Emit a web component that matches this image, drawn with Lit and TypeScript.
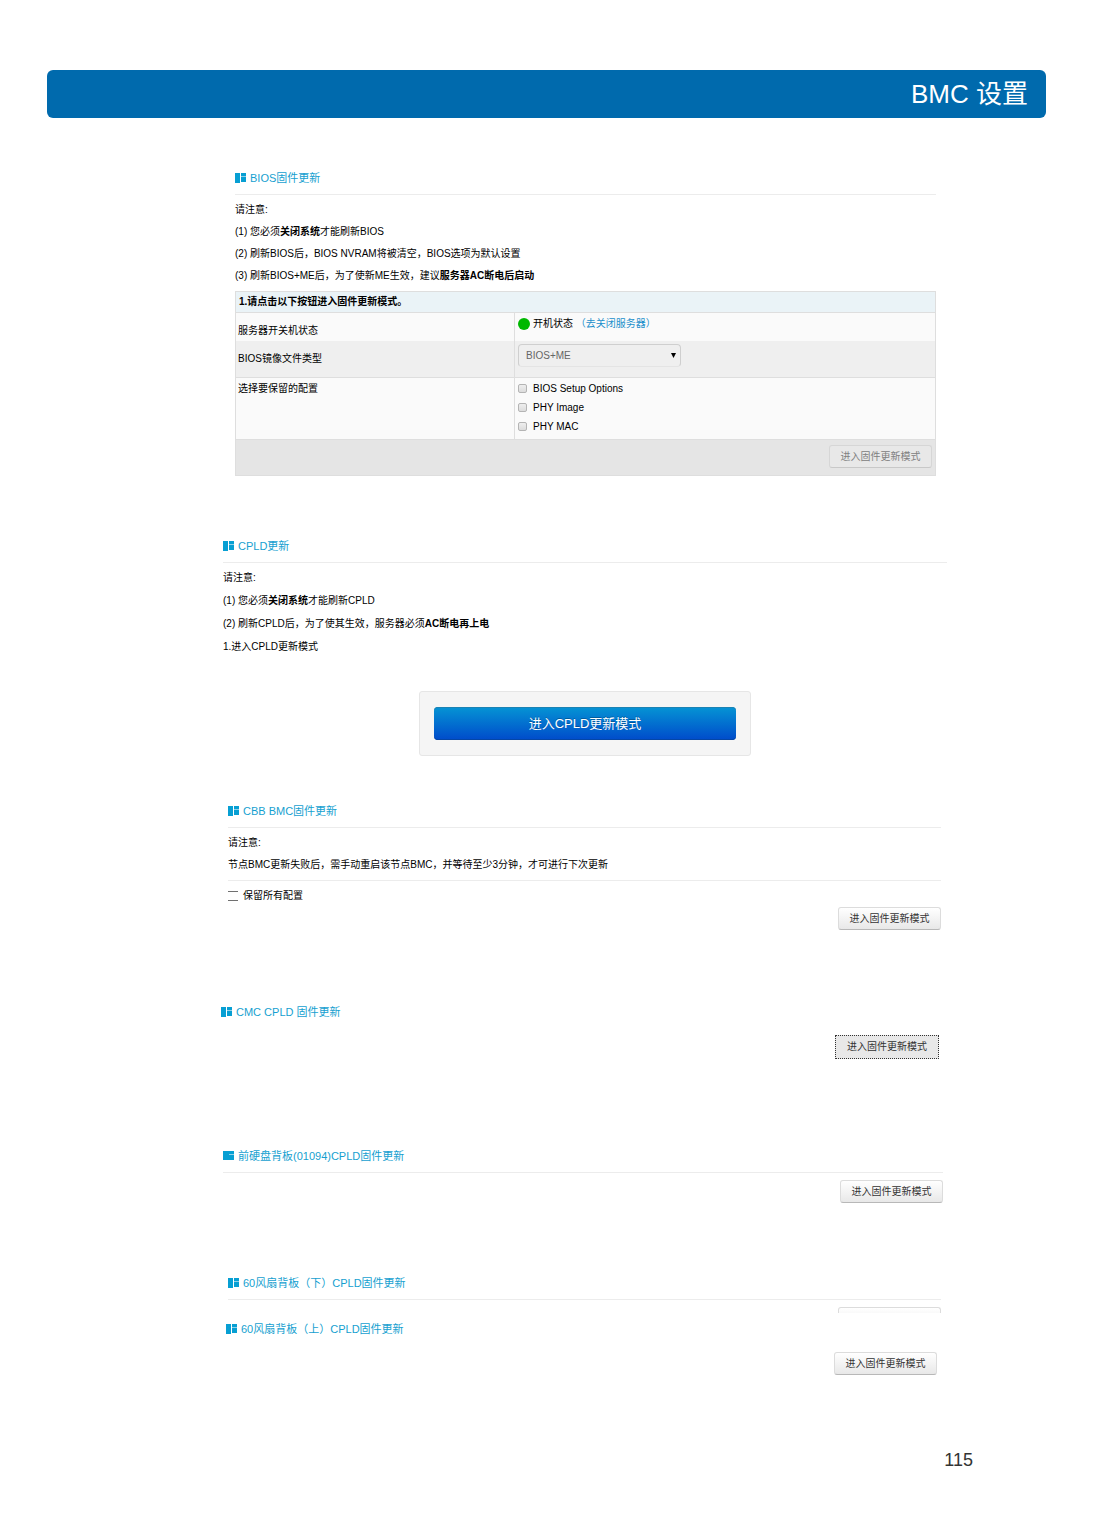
import { LitElement, html, css, svg, nothing } from "lit";
import { customElement, property } from "lit/decorators.js";

const ENTER_MODE = "进入固件更新模式";

@customElement("section-title")
class SectionTitle extends LitElement {
  @property({ type: Boolean }) ruled = false;
  @property({ type: Boolean }) joined = false;

  static styles = css`
    :host {
      display: block;
    }
    .title {
      display: flex;
      align-items: center;
      gap: 3px;
      margin: 0;
      border-bottom: 1px solid transparent;
      font-size: 11px;
      font-weight: 400;
      line-height: 32px;
      color: #169fd0;
    }
    .ruled {
      border-bottom-color: #ececec;
    }
    .icon {
      width: 12px;
      height: 10px;
      flex: none;
      fill: #079fd3;
    }
  `;

  render() {
    const blocks = this.joined
      ? svg`<path d="M0 0h11v3H6.500v1H11v5H0z"/><path d="M6 3h5v1H6z" fill="#8fd2ea"/>`
      : svg`<path d="M0 0h5v10H0zM6 0h5v3H6zM6 4h5v5H6z"/><path d="M6 3h5v1H6z" fill="#8fd2ea"/>`;
    return html`<h2 class="title ${this.ruled ? "ruled" : ""}">
      <svg class="icon" viewBox="0 0 12 10" aria-hidden="true">${blocks}</svg>
      <span><slot></slot></span>
    </h2>`;
  }
}

@customElement("mode-button")
class ModeButton extends LitElement {
  @property() label = ENTER_MODE;
  @property() variant = "";
  @property({ type: Boolean }) disabled = false;

  static styles = css`
    :host {
      display: flex;
      justify-content: flex-end;
    }
    .btn {
      box-sizing: border-box;
      height: 23px;
      min-width: 103px;
      padding: 0 9px;
      border: 1px solid #dcdcdc;
      border-bottom-color: #b8b8b8;
      border-radius: 3px;
      background: linear-gradient(#ffffff, #e8e8e8);
      color: #333;
      font: inherit;
      line-height: 20px;
    }
    .btn:disabled {
      background: #e8e8e8;
      border-color: #d6d6d6;
      border-bottom-color: #c8c8c8;
      color: #808080;
    }
    .focused {
      height: 24px;
      min-width: 104px;
      border: 1px dotted #333;
      border-radius: 0;
      background: #e8e8e8;
    }
    .primary {
      width: 100%;
      height: 33px;
      border: 0;
      border-radius: 4px;
      background: linear-gradient(#0594d4, #004bcb);
      box-shadow: inset 0 1px 0 #1b83b4, inset 0 -1px 0 #0546a6;
      color: #fff;
      font-size: 13px;
      text-shadow: 0 -1px 0 rgba(0, 0, 0, 0.25);
    }
  `;

  render() {
    return html`<button
      type="button"
      class="btn ${this.variant}"
      ?disabled=${this.disabled}
      aria-label=${this.label ? nothing : ENTER_MODE}
    >${this.label}</button>`;
  }
}

@customElement("app-root")
class AppRoot extends LitElement {
  static styles = css`
    :host {
      display: block;
      background: #fff;
      color: #000;
      font-family: "Liberation Sans", "Noto Sans CJK SC", sans-serif;
      font-size: 10px;
      line-height: 22px;
    }
    .banner {
      margin: 70px 47px 0;
      padding: 0 18px;
      border-radius: 6px;
      background: #006aad;
      color: #fff;
      text-align: right;
    }
    .banner-title {
      margin: 0;
      font-size: 26px;
      font-weight: 400;
      line-height: 48px;
    }
    .content {
      padding: 44px 146px 0 221px;
    }
    .bios {
      margin: 0 11px 54px 14px;
    }
    .cpld {
      margin: 0 0 39px 2px;
    }
    .cbb {
      margin: 0 6px 66px 7px;
    }
    .cmc {
      margin: 0 8px 81px 0;
    }
    .front {
      margin: 0 4px 64px 2px;
    }
    .lower {
      margin: 0 6px 0 7px;
    }
    .upper {
      margin: 0 10px 0 5px;
    }
    .notes {
      padding-top: 4px;
    }
    .note {
      margin: 0;
    }
    .cpld .notes {
      padding-top: 3px;
    }
    .cpld .note {
      line-height: 23px;
    }
    .grid {
      width: 100%;
      margin-top: 4px;
      border: 1px solid #dedede;
      border-spacing: 0;
      table-layout: fixed;
    }
    .grid th,
    .grid td {
      padding: 0 3px;
      text-align: left;
      vertical-align: top;
      font-weight: 400;
    }
    .grid .head {
      height: 20px;
      border-bottom: 1px solid #dedede;
      background: #eaf3f7;
      font-weight: 700;
      line-height: 20px;
    }
    .label-col {
      width: 278px;
    }
    .grid .name {
      padding: 7px 2px 0;
      line-height: 21px;
    }
    .grid .value {
      border-left: 1px solid #dedede;
    }
    .plain {
      background: #fafafa;
    }
    .shaded {
      background: #efefef;
    }
    .shaded .name,
    .shaded .value {
      border-bottom: 1px solid #dedede;
    }
    .grid .kept {
      padding-top: 0;
    }
    .grid .foot {
      padding: 5px 3px 7px;
      border-top: 1px solid #dedede;
      background: #e5e5e5;
    }
    .status {
      display: flex;
      align-items: center;
      gap: 3px;
    }
    .dot {
      width: 12px;
      height: 12px;
      border-radius: 50%;
      background: #00b800;
    }
    .link {
      color: #1c8fcb;
      text-decoration: none;
    }
    .picker {
      display: grid;
      width: 163px;
      margin: 3px 0 10px;
      align-items: center;
    }
    .picker > * {
      grid-area: 1 / 1;
    }
    .select {
      appearance: none;
      width: 100%;
      height: 23px;
      padding: 0 20px 0 7px;
      border: 1px solid #cfcfcf;
      border-bottom-color: #e4e4e4;
      border-radius: 4px;
      background: #efefef;
      color: #666;
      font: inherit;
    }
    .arrow {
      width: 5px;
      height: 5px;
      margin-right: 5px;
      justify-self: end;
      pointer-events: none;
    }
    .options {
      padding: 1px 0 3px;
    }
    .option {
      display: flex;
      align-items: center;
      gap: 6px;
      line-height: 19px;
    }
    .box {
      appearance: none;
      box-sizing: border-box;
      width: 9px;
      height: 9px;
      margin: 0;
      border: 1px solid #b4b4b4;
      border-radius: 2px;
      background: linear-gradient(#eeeeee, #dcdcdc);
    }
    .well {
      box-sizing: border-box;
      width: 46%;
      min-width: 180px;
      max-width: 332px;
      margin: 33px auto 0;
      padding: 15px 14px;
      border: 1px solid #e6e6e6;
      border-radius: 3px;
      background: #f5f5f5;
    }
    .keep {
      display: flex;
      align-items: center;
      gap: 5px;
      margin-top: 4px;
      padding-top: 4px;
      border-top: 1px solid #ececec;
    }
    .flat {
      width: 10px;
      height: 10px;
      border-width: 1px 0;
      border-color: #707070;
      border-radius: 0;
      background: #fff;
    }
    .action {
      padding-top: 6px;
    }
    .front .action {
      padding-top: 7px;
    }
    .cut {
      height: 6px;
      margin-top: 7px;
      overflow: hidden;
    }
    .page-number {
      padding: 74px 120px 64px 0;
      color: #333;
      font-size: 18px;
      text-align: right;
    }
  `;

  private options = ["BIOS Setup Options", "PHY Image", "PHY MAC"];

  render() {
    return html`
      <header class="banner"><h1 class="banner-title">BMC 设置</h1></header>
      <main class="content">
        <section class="bios">
          <section-title ruled>BIOS固件更新</section-title>
          <div class="notes">
            <p class="note">请注意:</p>
            <p class="note">(1) 您必须<b>关闭系统</b>才能刷新BIOS</p>
            <p class="note">(2) 刷新BIOS后，BIOS NVRAM将被清空，BIOS选项为默认设置</p>
            <p class="note">(3) 刷新BIOS+ME后，为了使新ME生效，建议<b>服务器AC断电后启动</b></p>
          </div>
          <table class="grid">
            <colgroup><col class="label-col" /><col /></colgroup>
            <thead>
              <tr><th class="head" colspan="2">1.请点击以下按钮进入固件更新模式。</th></tr>
            </thead>
            <tbody>
              <tr class="plain">
                <th class="name" scope="row">服务器开关机状态</th>
                <td class="value">
                  <div class="status">
                    <span class="dot"></span>
                    <span>开机状态 <a class="link" href="#power">（去关闭服务器）</a></span>
                  </div>
                </td>
              </tr>
              <tr class="shaded">
                <th class="name" scope="row"><label for="image-type">BIOS镜像文件类型</label></th>
                <td class="value">
                  <div class="picker">
                    <select class="select" id="image-type"><option>BIOS+ME</option></select>
                    <svg class="arrow" viewBox="0 0 5 5" aria-hidden="true"><path d="M0 0h5L2.500 5z" /></svg>
                  </div>
                </td>
              </tr>
              <tr class="plain">
                <th class="name kept" scope="row">选择要保留的配置</th>
                <td class="value">
                  <div class="options">
                    ${this.options.map(
                      (name) => html`<label class="option"><input class="box" type="checkbox" />${name}</label>`
                    )}
                  </div>
                </td>
              </tr>
            </tbody>
            <tfoot>
              <tr><td class="foot" colspan="2"><mode-button disabled></mode-button></td></tr>
            </tfoot>
          </table>
        </section>

        <section class="cpld">
          <section-title ruled>CPLD更新</section-title>
          <div class="notes">
            <p class="note">请注意:</p>
            <p class="note">(1) 您必须<b>关闭系统</b>才能刷新CPLD</p>
            <p class="note">(2) 刷新CPLD后，为了使其生效，服务器必须<b>AC断电再上电</b></p>
            <p class="note">1.进入CPLD更新模式</p>
          </div>
          <div class="well">
            <mode-button variant="primary" label="进入CPLD更新模式"></mode-button>
          </div>
        </section>

        <section class="cbb">
          <section-title ruled>CBB BMC固件更新</section-title>
          <div class="notes">
            <p class="note">请注意:</p>
            <p class="note">节点BMC更新失败后，需手动重启该节点BMC，并等待至少3分钟，才可进行下次更新</p>
          </div>
          <label class="keep"><input class="box flat" type="checkbox" />保留所有配置</label>
          <mode-button></mode-button>
        </section>

        <section class="cmc">
          <section-title>CMC CPLD 固件更新</section-title>
          <mode-button class="action" variant="focused"></mode-button>
        </section>

        <section class="front">
          <section-title ruled joined>前硬盘背板(01094)CPLD固件更新</section-title>
          <mode-button class="action"></mode-button>
        </section>

        <section class="lower">
          <section-title ruled>60风扇背板（下）CPLD固件更新</section-title>
          <div class="cut"><mode-button label=""></mode-button></div>
        </section>

        <section class="upper">
          <section-title>60风扇背板（上）CPLD固件更新</section-title>
          <mode-button class="action"></mode-button>
        </section>
      </main>
      <footer class="page-number">115</footer>
    `;
  }
}
